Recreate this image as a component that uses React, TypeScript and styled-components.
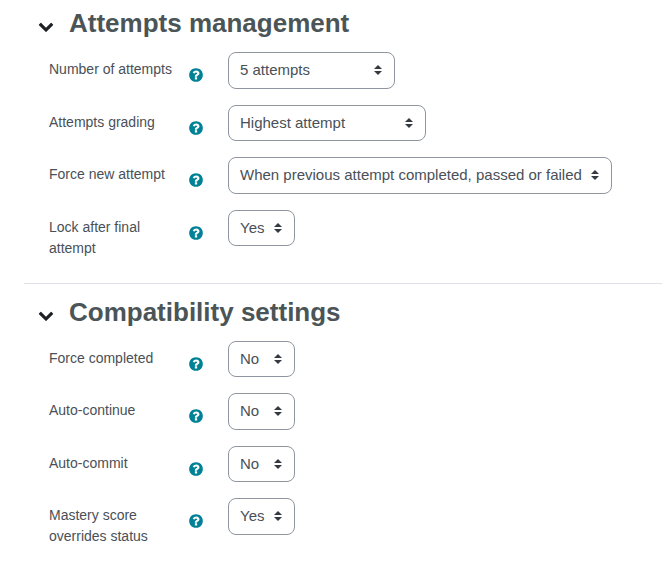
import React, { useId, useState } from "react";
import styled, { createGlobalStyle } from "styled-components";

const GlobalStyle = createGlobalStyle`
  *, *::before, *::after { box-sizing: border-box; }
  body {
    margin: 0;
    background: #fff;
    color: #495057;
    font-family: "Liberation Sans", Arial, sans-serif;
    font-size: 15px;
    line-height: 1.5;
  }
`;

const Form = styled.form`
  padding: 7px 0 0 24px;
`;

const Section = styled.section`
  & + & {
    margin-top: 24px;
    padding-top: 12px;
    border-top: 1px solid #dee2e6;
  }
`;

const SectionHeader = styled.div`
  display: flex;
  align-items: flex-start;
  gap: 8px;
  height: 32px;
  padding-left: 7px;
`;

const ToggleButton = styled.button<{ $open: boolean }>`
  display: flex;
  align-items: center;
  justify-content: center;
  width: 30px;
  height: 30px;
  margin: 4px 0 0;
  padding: 0;
  border: 0;
  border-radius: 50%;
  background: transparent;
  color: #1d2125;
  cursor: pointer;

  svg {
    transform: ${({ $open }) => ($open ? "none" : "rotate(-90deg)")};
  }
`;

const Title = styled.h3`
  margin: 0;
  font-size: 26px;
  font-weight: 700;
  line-height: 32px;
  color: #4b5557;
`;

const Rows = styled.div`
  display: flex;
  flex-direction: column;
  gap: 16px;
  padding: 13px 16px 0 25px;
`;

const Row = styled.div`
  display: grid;
  grid-template-columns: 139px 40px minmax(0, 1fr);
  align-items: start;
`;

const Label = styled.label`
  padding-top: 7px;
  font-size: 14px;
  line-height: 21px;
`;

const HelpButton = styled.button`
  display: flex;
  justify-self: start;
  margin: 15px 0 0;
  padding: 0;
  border: 0;
  background: transparent;
  color: #008196;
  cursor: pointer;
`;

const SelectBox = styled.div`
  display: grid;
  grid-template-columns: auto;
  align-items: center;
  justify-self: start;
  max-width: 100%;
`;

const Select = styled.select`
  grid-area: 1 / 1;
  appearance: none;
  min-width: 0;
  margin: 0;
  padding: 6px 29px 6px 11px;
  border: 1px solid #8f959e;
  border-radius: 8px;
  background: #fff;
  color: #495057;
  font: inherit;
  text-overflow: ellipsis;
`;

const Arrows = styled.svg`
  grid-area: 1 / 1;
  justify-self: end;
  margin-right: 13px;
  pointer-events: none;
`;

const ChevronIcon = () => (
  <svg width="16" height="16" viewBox="0 0 1792 1792" fill="currentColor" aria-hidden="true">
    <path d="M1683 808l-742 741q-19 19-45 19t-45-19l-742-741q-19-19-19-45.5t19-45.5l166-165q19-19 45-19t45 19l531 531 531-531q19-19 45-19t45 19l166 165q19 19 19 45.5t-19 45.5z" />
  </svg>
);

const HelpIcon = () => (
  <svg width="16" height="16" viewBox="0 0 1792 1792" fill="currentColor" aria-hidden="true">
    <path d="M1024 1376v-192q0-14-9-23t-23-9h-192q-14 0-23 9t-9 23v192q0 14 9 23t23 9h192q14 0 23-9t9-23zm256-672q0-88-55.5-163t-138.5-116-170-41q-243 0-371 213-15 24 8 42l132 100q7 6 19 6 16 0 25-12 53-68 86-92 34-24 86-24 48 0 85.5 26t37.5 59q0 38-20 61t-68 45q-63 28-115.5 86.5t-52.5 125.5v36q0 14 9 23t23 9h192q14 0 23-9t9-23q0-19 21.5-49.5t54.5-49.5q32-18 49-28.5t46-35 44.5-48 28-60.5 12.5-81zm384 192q0 209-103 385.5t-279.5 279.5-385.5 103-385.5-103-279.5-279.5-103-385.5 103-385.5 279.5-279.5 385.5-103 385.5 103 279.5 279.5 103 385.5z" />
  </svg>
);

interface Setting {
  label: string;
  value: string;
  options: string[];
}

const yesNo = ["No", "Yes"];

const attempts: Setting[] = [
  {
    label: "Number of attempts",
    value: "5 attempts",
    options: ["Unlimited attempts", "1 attempt", "2 attempts", "3 attempts", "4 attempts", "5 attempts", "6 attempts"],
  },
  {
    label: "Attempts grading",
    value: "Highest attempt",
    options: ["Highest attempt", "Average attempts", "First attempt", "Last completed attempt"],
  },
  {
    label: "Force new attempt",
    value: "When previous attempt completed, passed or failed",
    options: ["No", "When previous attempt completed, passed or failed", "Always"],
  },
  { label: "Lock after final attempt", value: "Yes", options: yesNo },
];

const compatibility: Setting[] = [
  { label: "Force completed", value: "No", options: yesNo },
  { label: "Auto-continue", value: "No", options: yesNo },
  { label: "Auto-commit", value: "No", options: yesNo },
  { label: "Mastery score overrides status", value: "Yes", options: yesNo },
];

function SettingRow({ label, value, options }: Setting) {
  const id = useId();
  return (
    <Row>
      <Label htmlFor={id}>{label}</Label>
      <HelpButton type="button" aria-label={`Help with ${label}`}>
        <HelpIcon />
      </HelpButton>
      <SelectBox>
        <Select id={id} defaultValue={value}>
          {options.map((option) => (
            <option key={option}>{option}</option>
          ))}
        </Select>
        <Arrows width="8" height="10" viewBox="0 0 4 5" aria-hidden="true">
          <path fill="#343a40" d="M2 0L0 2h4zm0 5L0 3h4z" />
        </Arrows>
      </SelectBox>
    </Row>
  );
}

function SettingsSection({ title, settings }: { title: string; settings: Setting[] }) {
  const [open, setOpen] = useState(true);
  return (
    <Section>
      <SectionHeader>
        <ToggleButton
          type="button"
          $open={open}
          aria-expanded={open}
          aria-label={title}
          onClick={() => setOpen(!open)}
        >
          <ChevronIcon />
        </ToggleButton>
        <Title>{title}</Title>
      </SectionHeader>
      {open && (
        <Rows>
          {settings.map((setting) => (
            <SettingRow key={setting.label} {...setting} />
          ))}
        </Rows>
      )}
    </Section>
  );
}

export default function App() {
  return (
    <>
      <GlobalStyle />
      <Form>
        <SettingsSection title="Attempts management" settings={attempts} />
        <SettingsSection title="Compatibility settings" settings={compatibility} />
      </Form>
    </>
  );
}
